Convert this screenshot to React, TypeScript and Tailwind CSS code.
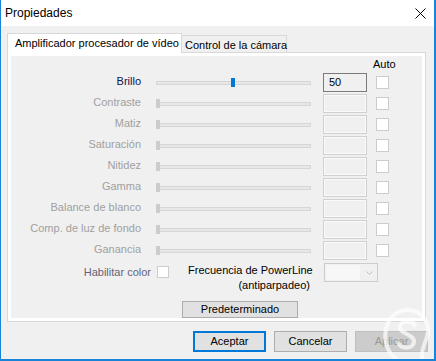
import React from "react";

const rows = [
  { label: "Brillo", active: true },
  { label: "Contraste" },
  { label: "Matiz" },
  { label: "Saturación" },
  { label: "Nitidez" },
  { label: "Gamma" },
  { label: "Balance de blanco" },
  { label: "Comp. de luz de fondo" },
  { label: "Ganancia" },
];

function Slider({ active }: { active?: boolean }) {
  return (
    <div className="relative ml-[15px] h-[4px] w-[155px] border border-[#d6d6d6] bg-[#e7e7e7]">
      {active ? (
        <div className="absolute left-[74px] top-[-4px] h-[9px] w-[4px] bg-[#0078d7]" />
      ) : (
        <div className="absolute left-[-1px] top-[-4px] h-[9px] w-[4px] bg-[#cccccc]" />
      )}
    </div>
  );
}

function Row({ label, active }: { label: string; active?: boolean }) {
  return (
    <div className="flex h-[19px] items-center">
      <div
        className={`w-[130px] pb-[3px] text-right leading-[15px] ${
          active ? "text-[#101050]" : "text-[#a0a0a0]"
        }`}
      >
        {label}
      </div>
      <Slider active={active} />
      {active ? (
        <div className="ml-[12px] flex h-[19px] w-[44px] items-center border border-[#7a7a7a] bg-[#f0f0f0] pl-[5px] text-black">
          50
        </div>
      ) : (
        <div className="ml-[12px] h-[19px] w-[44px] border border-[#d0d0d0] bg-[#f0f0f0] shadow-[inset_0_0_0_1px_#fafafa]" />
      )}
      <div className="ml-[9px] h-[13px] w-[13px] border border-[#cccccc] bg-white" />
    </div>
  );
}

function Button({ children, kind }: { children: React.ReactNode; kind?: "default" | "disabled" }) {
  const look =
    kind === "default"
      ? "border-2 border-[#0078d7] bg-[#e1e1e1] text-black"
      : kind === "disabled"
      ? "border border-[#bfbfbf] bg-[#cccccc] text-[#9a9a9a]"
      : "border border-[#adadad] bg-[#e1e1e1] text-black";
  return <div className={`flex h-[21px] w-[73px] items-center justify-center ${look}`}>{children}</div>;
}

export default function App() {
  return (
    <div className="relative flex h-[361px] w-[436px] flex-col overflow-hidden border-b-2 border-l border-r-2 border-[#1883d7] bg-[#f0f0f0] font-['Liberation_Sans',Arial,sans-serif] text-[11px] text-black">
      {/* barra de título */}
      <div className="flex h-[26px] shrink-0 items-center justify-between bg-white pl-[4px] pr-[8px]">
        <span className="text-[12px]">Propiedades</span>
        <svg width="11" height="11" viewBox="0 0 11 11" fill="none" stroke="#000" strokeWidth="1">
          <path d="M0.5 0.5 L10.5 10.5 M10.5 0.5 L0.5 10.5" />
        </svg>
      </div>

      <div className="px-[6px] pt-[7px]">
        {/* pestañas */}
        <div className="relative z-10 -mb-px flex h-[20px] items-end">
          <div className="flex h-[20px] w-[175px] items-center whitespace-nowrap border-l border-r border-t border-[#d9d9d9] bg-white pl-[7px]">
            Amplificador procesador de vídeo
          </div>
          <div className="mb-px flex h-[17px] w-[105px] items-center whitespace-nowrap border-r border-t border-[#d9d9d9] bg-[#f0f0f0] pl-[3px] pt-[2px]">
            Control de la cámara
          </div>
        </div>

        {/* página */}
        <div className="flex h-[270px] w-[419px] flex-col border border-[#d9d9d9] bg-white p-[3px]">
          <div className="flex flex-1 flex-col bg-[#f0f0f0]">
            <div className="flex h-[17px] items-center pl-[362px]">Auto</div>
            <div className="flex flex-col gap-[2px]">
              {rows.map((r) => (
                <Row key={r.label} label={r.label} active={r.active} />
              ))}
            </div>

            <div className="mt-[3px] flex items-start">
              <div className="mt-[2px] w-[140px] text-right leading-[15px] text-[#646478]">Habilitar color</div>
              <div className="ml-[6px] mt-[3px] h-[12px] w-[12px] border border-[#cccccc] bg-white" />
              <div className="ml-[19px] w-[122px] text-right leading-[15px]">
                <div className="whitespace-nowrap">Frecuencia de PowerLine</div>
                <div>(antiparpadeo)</div>
              </div>
              <div className="ml-[14px] flex h-[19px] w-[54px] items-center border border-[#cccccc] bg-[#f0f0f0]">
                <div className="ml-px h-[15px] w-[34px] bg-[#f7f7f7]" />
                <svg className="ml-[6px]" width="7" height="4" viewBox="0 0 7 4" fill="none" stroke="#bfbfbf" strokeWidth="1">
                  <path d="M0.5 0.5 L3.5 3.5 L6.5 0.5" />
                </svg>
              </div>
            </div>

            <div className="ml-[171px] mt-[8px] flex h-[17px] w-[116px] items-center justify-center border border-[#adadad] bg-[#e1e1e1]">
              Predeterminado
            </div>
          </div>
        </div>
      </div>

      {/* botones */}
      <div className="mt-[9px] flex justify-end gap-[8px] pr-[6px]">
        <Button kind="default">Aceptar</Button>
        <Button>Cancelar</Button>
        <Button kind="disabled">Aplicar</Button>
      </div>

      {/* marca de agua */}
      <svg
        className="absolute bottom-[-4px] right-[2px]"
        width="50"
        height="64"
        viewBox="0 0 50 64"
        fill="none"
        stroke="#ffffff"
        strokeLinecap="round"
        opacity="0.7"
      >
        <path
          d="M14 60 C4 52 2 40 4 30 C7 16 18 10 27 11 C38 12 47 21 46 33 C45 42 40 47 40 56 L40 64"
          strokeWidth="4"
        />
        <path d="M33 26 C30 21 19 21 18 28 C17 35 33 35 32 43 C31 50 20 50 17 45" strokeWidth="4" />
      </svg>
    </div>
  );
}
